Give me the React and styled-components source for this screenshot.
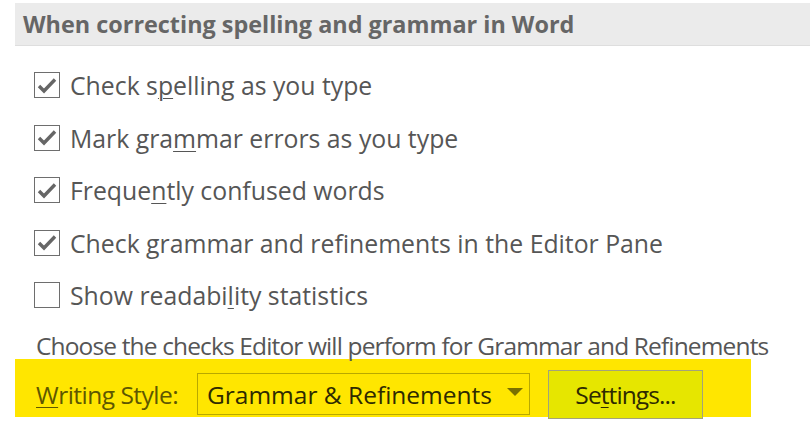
import styled, { createGlobalStyle } from "styled-components"

const Global = createGlobalStyle`
  html, body { margin: 0; padding: 0; background: #fff; }
  body { width: 810px; height: 426px; overflow: hidden; font-family: "Open Sans", "Noto Sans", sans-serif; }
`

const Page = styled.div`
  padding: 3px 0 0 15px;
`

const Header = styled.div`
  height: 42px;
  background: #ebebeb;
  border-bottom: 1px solid #dedede;
  display: flex;
  align-items: center;
  padding-left: 8px;
  font-size: 23.4px;
  font-weight: 700;
  color: #666;
`

const List = styled.div`
  display: flex;
  flex-direction: column;
  gap: 26.5px;
  padding: 26px 0 0 19px;
`

const Row = styled.label`
  display: flex;
  align-items: center;
  gap: 10px;
  height: 26px;
  font-size: 24.8px;
  color: #565656;
`

const Box = styled.span`
  width: 24px;
  height: 24px;
  border: 1px solid #6e6e6e;
  display: flex;
  align-items: center;
  justify-content: center;
  flex: none;
`

const Key = styled.u`
  text-decoration-thickness: 1px;
  text-underline-offset: 3px;
`

const Hint = styled.div`
  padding: 23px 0 0 21px;
  line-height: 30px;
  font-size: 24.5px;
  color: #565656;
  letter-spacing: -0.86px;
`

const Highlight = styled.div`
  width: 736px;
  height: 58px;
  margin-top: -2px;
  background: #ffe600;
  display: flex;
  align-items: center;
  padding: 12px 0 0 21px;
  box-sizing: border-box;
`

const Label = styled.span`
  font-size: 24.5px;
  color: #5e5700;
  letter-spacing: -0.5px;
  width: 161px;
`

const Select = styled.div`
  width: 333px;
  height: 42px;
  box-sizing: border-box;
  border: 1px solid #b8a800;
  display: flex;
  align-items: center;
  justify-content: space-between;
  padding: 0 6px 0 9px;
  font-size: 24.5px;
  color: #2e2a00;
`

const Caret = styled.span`
  width: 0;
  height: 0;
  border-left: 8px solid transparent;
  border-right: 8px solid transparent;
  border-top: 8px solid #7a7000;
  margin-bottom: 4px;
`

const Button = styled.div`
  width: 155px;
  height: 49px;
  box-sizing: border-box;
  margin-left: 18px;
  background: #e6e600;
  border: 1px solid #a3a37a;
  display: flex;
  align-items: center;
  justify-content: center;
  font-size: 24.5px;
  color: #2e2a00;
  letter-spacing: -0.9px;
`

const Check = () => (
  <svg width="20" height="17" viewBox="0 0 20 17">
    <path d="M2 9 L7 14 L18 2.5" fill="none" stroke="#666" strokeWidth="3.4" />
  </svg>
)

const items = [
  { on: true, text: ["Check s", "p", "elling as you type"] },
  { on: true, text: ["Mark gra", "m", "mar errors as you type"] },
  { on: true, text: ["Freque", "n", "tly confused words"] },
  { on: true, text: ["Check grammar and refinements in the Editor Pane"] },
  { on: false, text: ["Show readabi", "l", "ity statistics"] },
]

export default function App() {
  return (
    <Page>
      <Global />
      <Header>When correcting spelling and grammar in Word</Header>
      <List>
        {items.map((it, i) => (
          <Row key={i}>
            <Box>{it.on && <Check />}</Box>
            <span>
              {it.text[0]}
              {it.text[1] && <Key>{it.text[1]}</Key>}
              {it.text[2]}
            </span>
          </Row>
        ))}
      </List>
      <Hint>Choose the checks Editor will perform for Grammar and Refinements</Hint>
      <Highlight>
        <Label><Key>W</Key>riting Style:</Label>
        <Select>
          <span>Grammar &amp; Refinements</span>
          <Caret />
        </Select>
        <Button>Se<Key>t</Key>tings...</Button>
      </Highlight>
    </Page>
  )
}
